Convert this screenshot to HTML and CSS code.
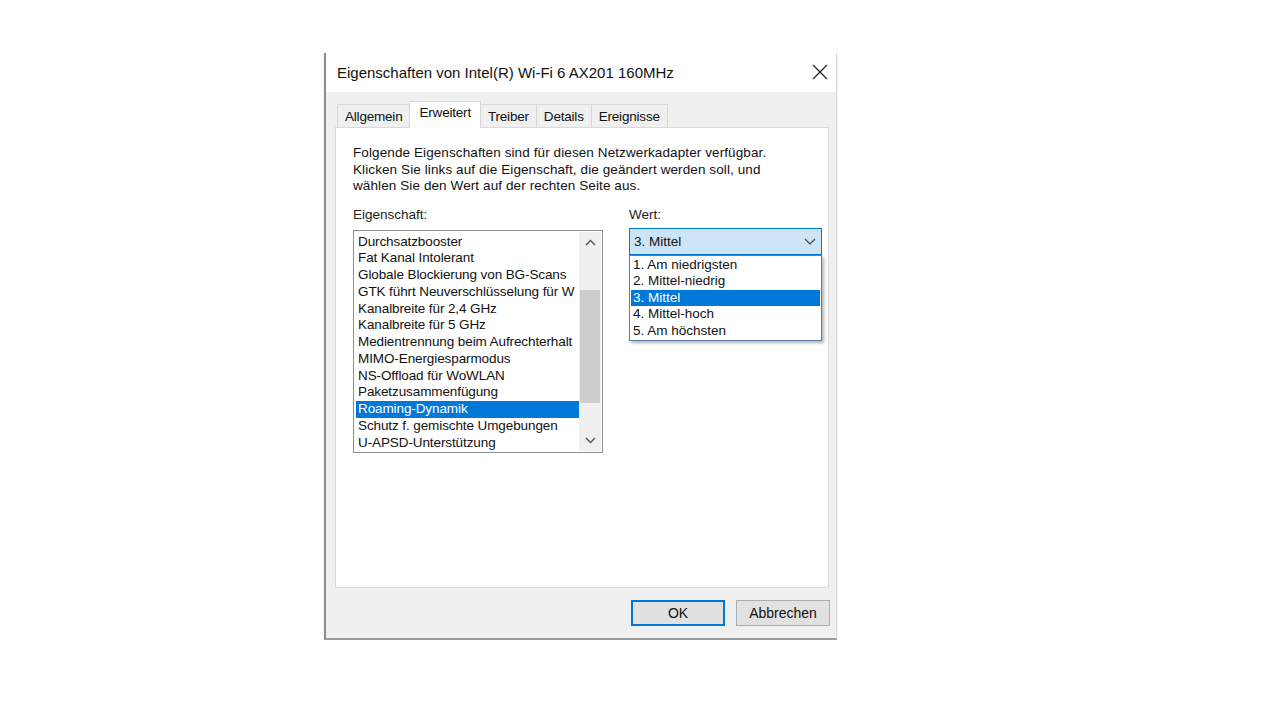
FILE: index.html
```html
<!DOCTYPE html>
<html lang="de">
<head>
    <meta charset="UTF-8">
    <meta name="viewport" content="width=device-width, initial-scale=1.0">
    <title>Eigenschaften von Intel(R) Wi-Fi 6 AX201 160MHz</title>
    <link rel="stylesheet" href="styles.css">
</head>
<body>
    <div class="dialog">
        <div class="titlebar">
            <span class="title">Eigenschaften von Intel(R) Wi-Fi 6 AX201 160MHz</span>
            <svg class="close" width="16" height="16" viewBox="0 0 16 16">
                <path d="M1 1 L15 15 M15 1 L1 15" stroke="#222" stroke-width="1.3" fill="none"/>
            </svg>
        </div>

        <div class="dialog-body">
            <div class="tabs">
                <div class="tab">Allgemein</div>
                <div class="tab active">Erweitert</div>
                <div class="tab">Treiber</div>
                <div class="tab">Details</div>
                <div class="tab">Ereignisse</div>
            </div>

            <div class="panel">
                <p class="intro">
                    Folgende Eigenschaften sind für diesen Netzwerkadapter verfügbar.<br>
                    Klicken Sie links auf die Eigenschaft, die geändert werden soll, und<br>
                    wählen Sie den Wert auf der rechten Seite aus.
                </p>

                <div class="fields">
                    <div class="field-left">
                        <div class="label">Eigenschaft:</div>
                        <div class="listbox">
                            <ul class="list-items">
                                <li>Durchsatzbooster</li>
                                <li>Fat Kanal Intolerant</li>
                                <li>Globale Blockierung von BG-Scans</li>
                                <li>GTK führt Neuverschlüsselung für W</li>
                                <li>Kanalbreite für 2,4 GHz</li>
                                <li>Kanalbreite für 5 GHz</li>
                                <li>Medientrennung beim Aufrechterhalt</li>
                                <li>MIMO-Energiesparmodus</li>
                                <li>NS-Offload für WoWLAN</li>
                                <li>Paketzusammenfügung</li>
                                <li class="selected">Roaming-Dynamik</li>
                                <li>Schutz f. gemischte Umgebungen</li>
                                <li>U-APSD-Unterstützung</li>
                            </ul>
                            <div class="scrollbar">
                                <svg class="arrow" width="11" height="7" viewBox="0 0 11 7">
                                    <path d="M1 6 L5.5 1.5 L10 6" stroke="#555" stroke-width="1.4" fill="none"/>
                                </svg>
                                <div class="track">
                                    <div class="thumb"></div>
                                </div>
                                <svg class="arrow" width="11" height="7" viewBox="0 0 11 7">
                                    <path d="M1 1 L5.5 5.5 L10 1" stroke="#555" stroke-width="1.4" fill="none"/>
                                </svg>
                            </div>
                        </div>
                    </div>

                    <div class="field-right">
                        <div class="label">Wert:</div>
                        <div class="combo">
                            <span>3. Mittel</span>
                            <svg width="12" height="7" viewBox="0 0 12 7">
                                <path d="M1 1 L6 6 L11 1" stroke="#444" stroke-width="1.1" fill="none"/>
                            </svg>
                        </div>
                        <ul class="dropdown">
                            <li>1. Am niedrigsten</li>
                            <li>2. Mittel-niedrig</li>
                            <li class="selected">3. Mittel</li>
                            <li>4. Mittel-hoch</li>
                            <li>5. Am höchsten</li>
                        </ul>
                    </div>
                </div>
            </div>

            <div class="buttons">
                <button class="btn btn-default">OK</button>
                <button class="btn">Abbrechen</button>
            </div>
        </div>
    </div>
</body>
</html>
```

FILE: styles.css
```css
* {
    margin: 0;
    padding: 0;
    box-sizing: border-box;
    font-family: 'Liberation Sans', Arial, sans-serif;
}

body {
    background: white;
    padding: 53px 0 0 324px;
}

.dialog {
    width: 513px;
    height: 587px;
    background: #f0f0f0;
    border-left: 2px solid #8c8c8c;
    border-right: 1px solid #d6d6d6;
    border-bottom: 2px solid #9a9a9a;
    box-shadow: 0 2px 2px rgba(0,0,0,0.12);
    display: flex;
    flex-direction: column;
}

/* Barre de titre */
.titlebar {
    height: 39px;
    background: white;
    display: flex;
    align-items: center;
    justify-content: space-between;
    padding: 0 8px 0 11px;
}

.title {
    font-size: 15px;
    color: #111;
}

.close {
    margin-bottom: 1px;
}

.dialog-body {
    flex: 1;
    padding: 10px 7px 0 9px;
    display: flex;
    flex-direction: column;
}

/* Onglets */
.tabs {
    display: flex;
    padding-left: 2px;
    height: 25px;
    align-items: flex-end;
    position: relative;
    z-index: 1;
}

.tab {
    height: 23px;
    padding: 0 7px;
    font-size: 13.5px;
    letter-spacing: -0.2px;
    color: #111;
    border: 1px solid #d9d9d9;
    border-bottom: none;
    margin-right: -1px;
    display: flex;
    align-items: center;
    background: #f0f0f0;
}

.tab.active {
    height: 27px;
    margin-bottom: -1px;
    background: white;
    padding: 0 9px 5px 9px;
}

.panel {
    height: 461px;
    background: white;
    border: 1px solid #d9d9d9;
    padding: 17px 6px 0 17px;
}

.intro {
    font-size: 13.5px;
    letter-spacing: 0.1px;
    line-height: 16.5px;
    color: #111;
}

.fields {
    display: flex;
    gap: 26px;
    margin-top: 12px;
}

.label {
    font-size: 13.5px;
    color: #222;
    height: 19px;
}

.field-left {
    width: 250px;
    flex-shrink: 0;
}

.field-right {
    width: 193px;
    flex-shrink: 0;
}

/* Liste des propriétés */
.listbox {
    margin-top: 4px;
    height: 223px;
    border: 1px solid #8f8f8f;
    display: flex;
    padding: 1px 1px 1px 2px;
}

.list-items {
    list-style: none;
    flex: 1;
    overflow: hidden;
    padding-top: 2px;
    font-size: 13.5px;
    letter-spacing: -0.1px;
    line-height: 16.75px;
    color: #111;
}

.list-items li {
    white-space: nowrap;
    padding-left: 2px;
}

.list-items li.selected,
.dropdown li.selected {
    background: #0078d7;
    color: white;
}

.scrollbar {
    width: 22px;
    display: flex;
    flex-direction: column;
    align-items: center;
    background: #f0f0f0;
}

.arrow {
    margin: 7px 0;
}

.track {
    flex: 1;
    width: 100%;
    padding: 37px 1px 27px 1px;
}

.thumb {
    height: 100%;
    background: #cdcdcd;
}

/* Liste déroulante */
.combo {
    margin-top: 2px;
    height: 27px;
    background: #cce4f7;
    border: 1px solid #0078d7;
    display: flex;
    align-items: center;
    justify-content: space-between;
    padding: 0 5px 0 4px;
    font-size: 13.5px;
    color: #111;
}

.dropdown {
    list-style: none;
    height: 86px;
    background: white;
    border: 1px solid #5a7da8;
    box-shadow: 2px 2px 3px rgba(0,0,0,0.3);
    padding: 1px 1px;
    font-size: 13.5px;
    line-height: 16.5px;
    color: #111;
}

.dropdown li {
    padding-left: 2px;
}

/* Boutons */
.buttons {
    display: flex;
    justify-content: flex-end;
    gap: 11px;
    margin-top: 12px;
    margin-right: -1px;
}

.btn {
    width: 94px;
    height: 26px;
    background: #e1e1e1;
    border: 1px solid #adadad;
    font-size: 14px;
    color: #111;
}

.btn-default {
    border: 2px solid #0078d7;
}
```
